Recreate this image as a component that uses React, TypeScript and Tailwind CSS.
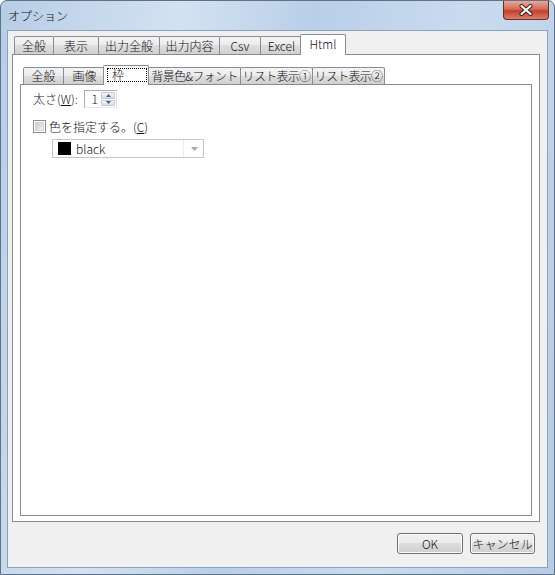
import React from 'react';

type TabProps = {
    label: React.ReactNode;
    w: string;
    selected?: boolean;
    small?: boolean;
    focus?: boolean;
    first?: boolean;
    tight?: boolean;
};

function Tab({ label, w, selected, small, focus, first, tight }: TabProps) {
    if (selected) {
        return (
            <div
                className={`${w} ${small ? 'h-[20px]' : 'h-[21px]'} ml-[-3px] relative top-px z-10 flex bg-white border border-b-0 border-[#898c95] rounded-t-[2px] whitespace-nowrap`}
            >
                {focus ? (
                    <div className="flex-1 flex items-center mt-[2px] ml-[3px] mr-[1px] mb-[3px] border border-dotted border-black pl-[4px]">
                        {label}
                    </div>
                ) : (
                    <div className="flex-1 flex items-center justify-center pb-[2px]">{label}</div>
                )}
            </div>
        );
    }
    return (
        <div
            className={`${w} ${small ? 'h-[17px]' : 'h-[18px]'} ${first ? '' : 'ml-[-1px]'} ${tight ? 'tracking-[-0.7px]' : ''} flex items-center justify-center whitespace-nowrap overflow-hidden border border-b-0 border-[#898c95] rounded-t-[2px] bg-[linear-gradient(to_bottom,#f4f4f4,#ebebeb_50%,#dedede_50%,#d0d0d0)]`}
        >
            {label}
        </div>
    );
}

function Button({ label, w }: { label: string; w: string }) {
    return (
        <div
            className={`${w} h-[21px] flex items-center justify-center rounded-[3px] border border-[#707070] bg-[linear-gradient(to_bottom,#f2f2f2,#ebebeb_50%,#dddddd_50%,#cfcfcf)] shadow-[inset_0_0_0_1px_#fcfcfc]`}
        >
            {label}
        </div>
    );
}

export default function App() {
    return (
        <div className="w-[555px] h-[575px] flex flex-col rounded-t-[7px] border border-[#5f7186] bg-[linear-gradient(100deg,#b7cde6_0%,#d3e2f2_28%,#b9cfe8_48%,#c9dbef_72%,#b6cce5_100%)] font-['Noto_Sans_CJK_JP',sans-serif] font-light text-[12px] leading-none text-[#111]">
            {/* Title bar */}
            <div className="h-[29px] flex justify-between items-start shrink-0">
                <div className="self-center pl-[7px] pt-[1px] text-[12px]">オプション</div>
                <div className="mr-[5px] w-[46px] h-[19px] flex items-center justify-center rounded-b-[4px] border border-t-0 border-[#6e2a23] bg-[linear-gradient(to_bottom,#e8a89c,#d46a58_45%,#c2412c_55%,#d7806a)]">
                    <svg width="16" height="12" viewBox="0 0 16 12">
                        <path d="M3.5 2 L12.5 10 M12.5 2 L3.5 10" stroke="#3b1a16" strokeWidth="4" strokeLinecap="round" />
                        <path d="M3.5 2 L12.5 10 M12.5 2 L3.5 10" stroke="#ffffff" strokeWidth="2.2" strokeLinecap="round" />
                    </svg>
                </div>
            </div>

            {/* Client area */}
            <div className="mx-[6px] h-[538px] flex flex-col border border-[#8da2ba] bg-[#f0f0f0] pl-[4px] pr-[7px] pt-[2px]">
                {/* Outer tabs */}
                <div className="h-[21px] flex items-end pl-[2px] shrink-0">
                    <Tab first w="w-[40px]" label="全般" />
                    <Tab w="w-[46px]" label="表示" />
                    <Tab w="w-[62px]" label="出力全般" />
                    <Tab w="w-[61px]" label="出力内容" />
                    <Tab w="w-[42px]" label="Csv" />
                    <Tab w="w-[43px]" label="Excel" />
                    <Tab selected w="w-[46px]" label="Html" />
                </div>
                <div className="h-[468px] flex flex-col border border-[#898c95] bg-white px-[7px] pt-[9px] pb-[5px]">
                    {/* Inner tabs */}
                    <div className="h-[20px] flex items-end pl-[3px] shrink-0">
                        <Tab first small w="w-[41px]" label="全般" />
                        <Tab small w="w-[43px]" label="画像" />
                        <Tab selected small focus w="w-[46px]" label="枠" />
                        <Tab small tight w="w-[93px]" label="背景色&フォント" />
                        <Tab small tight w="w-[73px]" label="リスト表示①" />
                        <Tab small tight w="w-[73px]" label="リスト表示②" />
                    </div>
                    <div className="flex-1 border border-[#898c95] bg-white pl-[12px] pt-[5px]">
                        {/* 太さ */}
                        <div className="flex items-center h-[18px]">
                            <div className="w-[51px]">
                                太さ(<span className="underline">W</span>):
                            </div>
                            <div className="w-[33px] h-[18px] flex border border-[#abadb3] border-r-[#dbdfe6] border-b-[#e3e9ef] bg-white">
                                <div className="flex-1 flex items-center justify-end pr-[3px]">1</div>
                                <div className="w-[15px] flex flex-col gap-px py-px pr-px">
                                    <div className="flex-1 flex items-center justify-center rounded-[1px] border border-[#c2c9d3] bg-[linear-gradient(to_bottom,#f1f4f8,#d8dfe8)]">
                                        <svg width="5" height="3" viewBox="0 0 5 3">
                                            <path d="M0 3 L2.5 0 L5 3 Z" fill="#4d6185" />
                                        </svg>
                                    </div>
                                    <div className="flex-1 flex items-center justify-center rounded-[1px] border border-[#c2c9d3] bg-[linear-gradient(to_bottom,#f1f4f8,#d8dfe8)]">
                                        <svg width="5" height="3" viewBox="0 0 5 3">
                                            <path d="M0 0 L2.5 3 L5 0 Z" fill="#4d6185" />
                                        </svg>
                                    </div>
                                </div>
                            </div>
                        </div>

                        {/* 色を指定する */}
                        <div className="flex items-center mt-[12px] h-[13px]">
                            <div className="w-[13px] h-[13px] border border-[#8e8f8f] bg-white p-px">
                                <div className="w-full h-full bg-[linear-gradient(135deg,#c9ccd1,#f2f2f2)] border border-[#d2d4d7]" />
                            </div>
                            <div className="ml-[3px]">
                                色を指定する。(<span className="underline">C</span>)
                            </div>
                        </div>

                        {/* Combo */}
                        <div className="ml-[19px] mt-[6px] w-[152px] h-[19px] flex border border-[#c6c6c6] bg-white">
                            <div className="flex-1 flex items-center pl-[5px] border-r border-[#ececec] mr-[2px]">
                                <div className="w-[13px] h-[13px] bg-black" />
                                <div className="ml-[5px]">black</div>
                            </div>
                            <div className="w-[17px] flex items-center justify-center">
                                <svg width="7" height="4" viewBox="0 0 7 4">
                                    <path d="M0 0 L7 0 L3.5 4 Z" fill="#a9a9a9" />
                                </svg>
                            </div>
                        </div>
                    </div>
                </div>

                {/* Buttons */}
                <div className="flex justify-end gap-[7px] pr-[5px] mt-[11px]">
                    <Button w="w-[66px]" label="OK" />
                    <Button w="w-[65px]" label="キャンセル" />
                </div>
            </div>
        </div>
    );
}
